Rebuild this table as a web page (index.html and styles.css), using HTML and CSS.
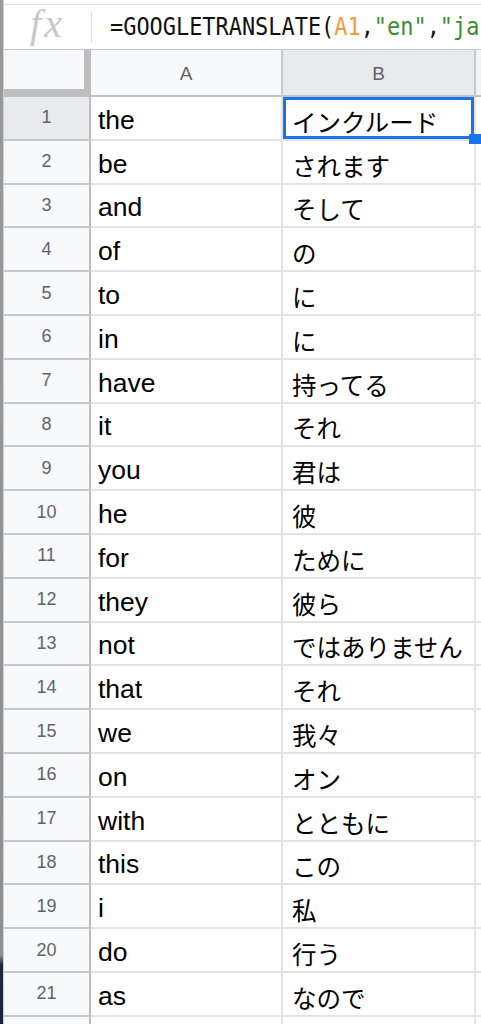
FILE: index.html
```html
<!DOCTYPE html>
<html lang="ja">
<head>
<meta charset="utf-8">
<title>Sheet</title>
<link rel="stylesheet" href="styles.css">
</head>
<body>
<div class="page">
  <div class="strip"></div>
  <div class="main">
    <div class="fbar">
      <div class="fx-box"><span class="fx">fx</span></div>
      <div class="formula"><span class="ftext">=GOOGLETRANSLATE(<span class="ref">A1</span>,<span class="str">"en"</span>,<span class="str">"ja"</span>)</span></div>
    </div>
    <div class="sheet">
      <div class="corner"></div>
      <div class="colh">A</div>
      <div class="colh active">B</div>
      <div class="colh edge"></div>

      <div class="rowh active">1</div><div class="cell">the</div><div class="cell jp sel">インクルード</div><div class="cell edge"></div>
      <div class="rowh">2</div><div class="cell">be</div><div class="cell jp">されます</div><div class="cell edge"></div>
      <div class="rowh">3</div><div class="cell">and</div><div class="cell jp">そして</div><div class="cell edge"></div>
      <div class="rowh">4</div><div class="cell">of</div><div class="cell jp">の</div><div class="cell edge"></div>
      <div class="rowh">5</div><div class="cell">to</div><div class="cell jp">に</div><div class="cell edge"></div>
      <div class="rowh">6</div><div class="cell">in</div><div class="cell jp">に</div><div class="cell edge"></div>
      <div class="rowh">7</div><div class="cell">have</div><div class="cell jp">持ってる</div><div class="cell edge"></div>
      <div class="rowh">8</div><div class="cell">it</div><div class="cell jp">それ</div><div class="cell edge"></div>
      <div class="rowh">9</div><div class="cell">you</div><div class="cell jp">君は</div><div class="cell edge"></div>
      <div class="rowh">10</div><div class="cell">he</div><div class="cell jp">彼</div><div class="cell edge"></div>
      <div class="rowh">11</div><div class="cell">for</div><div class="cell jp">ために</div><div class="cell edge"></div>
      <div class="rowh">12</div><div class="cell">they</div><div class="cell jp">彼ら</div><div class="cell edge"></div>
      <div class="rowh">13</div><div class="cell">not</div><div class="cell jp">ではありません</div><div class="cell edge"></div>
      <div class="rowh">14</div><div class="cell">that</div><div class="cell jp">それ</div><div class="cell edge"></div>
      <div class="rowh">15</div><div class="cell">we</div><div class="cell jp">我々</div><div class="cell edge"></div>
      <div class="rowh">16</div><div class="cell">on</div><div class="cell jp">オン</div><div class="cell edge"></div>
      <div class="rowh">17</div><div class="cell">with</div><div class="cell jp">とともに</div><div class="cell edge"></div>
      <div class="rowh">18</div><div class="cell">this</div><div class="cell jp">この</div><div class="cell edge"></div>
      <div class="rowh">19</div><div class="cell">i</div><div class="cell jp">私</div><div class="cell edge"></div>
      <div class="rowh">20</div><div class="cell">do</div><div class="cell jp">行う</div><div class="cell edge"></div>
      <div class="rowh">21</div><div class="cell">as</div><div class="cell jp">なので</div><div class="cell edge"></div>
      <div class="rowh"></div><div class="cell"></div><div class="cell jp"></div><div class="cell edge"></div>
    </div>
  </div>
</div>
</body>
</html>
```

FILE: styles.css
```css
* { box-sizing: border-box; }
html, body {
  margin: 0;
  padding: 0;
  width: 481px;
  height: 1024px;
  overflow: hidden;
  background: #ffffff;
}
.page {
  display: flex;
  width: 481px;
  height: 1024px;
  overflow: hidden;
}
.strip {
  flex: 0 0 4px;
  height: 1024px;
  background: linear-gradient(to bottom, #9a9a9a 0, #8f8f8f 955px, #1d2839 965px, #1a2436 1024px);
  border-right: 1px solid #cfcfcf;
}
.main {
  flex: 0 0 477px;
  display: flex;
  flex-direction: column;
  overflow: hidden;
}
.fbar {
  height: 50px;
  padding-top: 4px;
  display: flex;
  align-items: stretch;
  border-bottom: 1px solid #c6c6c6;
  background: #fff;
  flex: 0 0 auto;
}
.fbar > * { border-top: 1px solid #e2e2e2; }
.fx-box {
  flex: 0 0 87px;
  display: flex;
  align-items: center;
  justify-content: center;
  padding: 0 0 6px 0;
}
.fx {
  font-family: "Liberation Serif", serif;
  font-style: italic;
  font-size: 40px;
  line-height: 40px;
  color: #c8c8c8;
  letter-spacing: 3px;
}
.formula {
  flex: 1 1 auto;
  display: flex;
  align-items: center;
  padding: 0 0 0 19px;
  overflow: hidden;
  white-space: nowrap;
  position: relative;
}
.formula::before {
  content: "";
  position: absolute;
  left: 0;
  top: 7px;
  bottom: 6px;
  width: 1px;
  background: #dadce0;
}
.ftext {
  display: inline-block;
  font-family: "DejaVu Sans Mono", monospace;
  font-size: 24px;
  color: #111;
  transform: scaleX(0.913);
  transform-origin: left center;
}
.ref { color: #ef9b3b; }
.str { color: #3b8d32; }

.sheet {
  display: grid;
  grid-template-columns: 87px 192px 193px 5px;
  grid-template-rows: 47px;
  grid-auto-rows: 43.8px;
  flex: 0 0 auto;
}
.corner {
  background: #f8f9fa;
  border-right: 7px solid #bebebe;
  border-bottom: 8px solid #bebebe;
}
.colh {
  background: #f8f9fa;
  border-right: 2px solid #c8c8c8;
  border-bottom: 2px solid #c2c2c2;
  display: flex;
  align-items: center;
  justify-content: center;
  padding-top: 3px;
  font-family: "Liberation Sans", Arial, sans-serif;
  font-size: 19px;
  color: #5f6368;
}
.colh.active { background: #e8eaed; }
.colh.edge { border-right: 0; background: #f1f3f4; }
.rowh {
  background: #f8f9fa;
  border-right: 2px solid #bdbdbd;
  border-bottom: 2px solid #c8c8c8;
  display: flex;
  align-items: center;
  justify-content: center;
  font-family: "Liberation Sans", Arial, sans-serif;
  font-size: 18px;
  color: #5f6368;
}
.rowh.active { background: #e8eaed; }
.cell {
  background: #fff;
  border-right: 2px solid #e3e3e3;
  border-bottom: 2px solid #e3e3e3;
  display: flex;
  align-items: flex-end;
  padding: 0 0 4px 7px;
  font-family: "Liberation Sans", Arial, "Noto Sans CJK JP", sans-serif;
  font-size: 26.5px;
  line-height: 29px;
  color: #000;
  white-space: nowrap;
  overflow: hidden;
}
.cell.jp {
  font-family: "Noto Sans CJK JP", sans-serif;
  font-size: 24.5px;
  line-height: 28px;
  padding: 0 0 3px 9px;
}
.cell.edge { border-right: 0; }
.cell.sel {
  position: relative;
  overflow: visible;
  box-shadow: inset 0 0 0 3px #1a73e8;
}
.cell.sel::after {
  content: "";
  position: absolute;
  left: 186px;
  top: 37px;
  width: 12px;
  height: 10px;
  background: #1a73e8;
  z-index: 2;
}
```
